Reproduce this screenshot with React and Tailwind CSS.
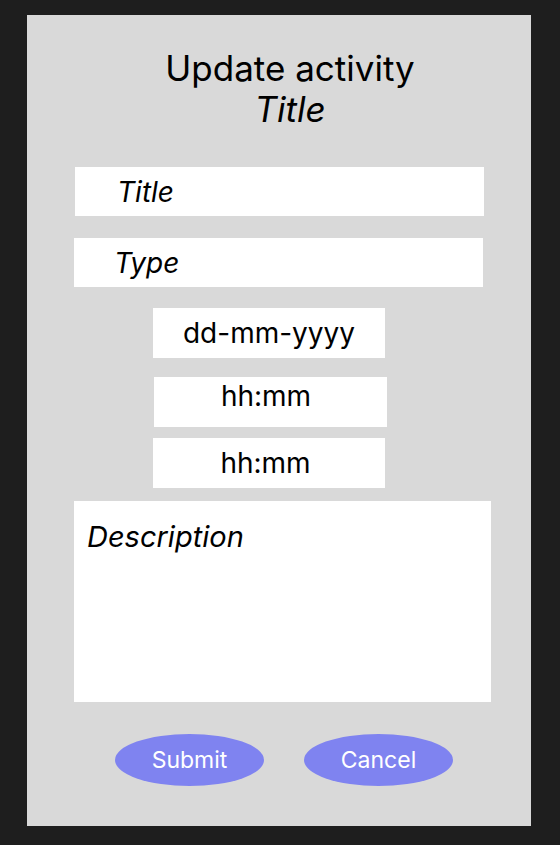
import React from "react";

function Field({ className, children }) {
  return (
    <div className={"bg-white flex items-center text-[28px] text-black " + className}>
      {children}
    </div>
  );
}

export default function App() {
  return (
    <div
      className="min-h-[845px] w-[560px] bg-[#1e1e1e] pt-[15px] pl-[27px]"
      style={{ fontFamily: "Inter, 'Noto Sans', sans-serif" }}
    >
      <div className="w-[504px] h-[811px] bg-[#d9d9d9] flex flex-col">
        {/* heading */}
        <div className="mt-[33px] ml-[22px] text-center text-[35px] leading-[41px] text-black">
          <div>Update activity</div>
          <div className="italic">Title</div>
        </div>

        <Field className="mt-[37px] ml-[48px] w-[409px] h-[49px] pl-[42px] italic">Title</Field>
        <Field className="mt-[22px] ml-[47px] w-[409px] h-[49px] pl-[40px] italic">Type</Field>
        <Field className="mt-[21px] ml-[126px] w-[232px] h-[50px] justify-center">dd-mm-yyyy</Field>
        <Field className="mt-[19px] ml-[127px] w-[233px] h-[50px] justify-center pr-[9px] pb-[12px]">hh:mm</Field>
        <Field className="mt-[11px] ml-[126px] w-[232px] h-[50px] justify-center pr-[7px]">hh:mm</Field>

        <div className="mt-[13px] ml-[47px] w-[417px] h-[201px] bg-white pl-[13px] pt-[18px] text-[29px] leading-[36px] italic text-black">
          Description
        </div>

        <div className="mt-[32px] ml-[88px] flex gap-[40px]">
          <button className="w-[149px] h-[52px] rounded-[50%] bg-[#7f83f0] text-white text-[23px]">
            Submit
          </button>
          <button className="w-[149px] h-[52px] rounded-[50%] bg-[#7f83f0] text-white text-[23px]">
            Cancel
          </button>
        </div>
      </div>
    </div>
  );
}
